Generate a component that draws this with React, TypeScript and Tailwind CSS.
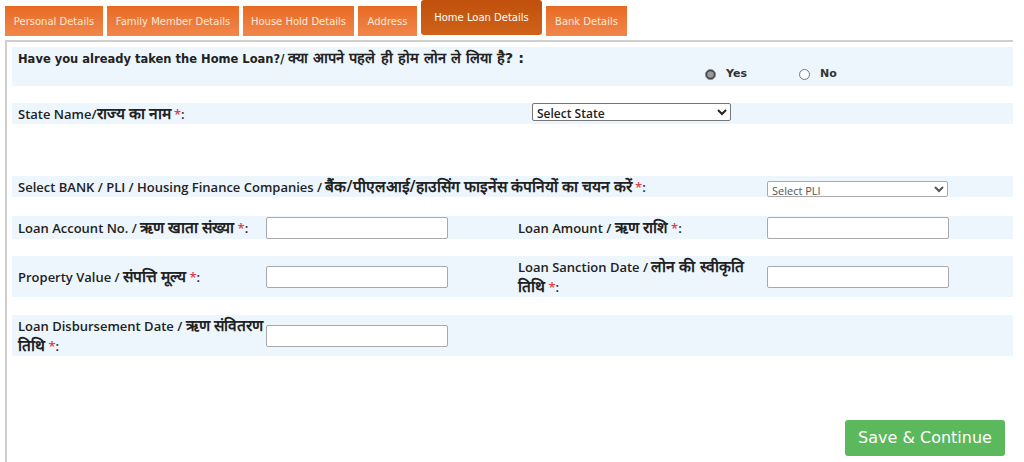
import React from "react";

const TABS = [
  { label: "Personal Details", w: "w-[98px]" },
  { label: "Family Member Details", w: "w-[132px]" },
  { label: "House Hold Details", w: "w-[111px]" },
  { label: "Address", w: "w-[59px]" },
  { label: "Home Loan Details", w: "w-[121px]", active: true },
  { label: "Bank Details", w: "w-[81px]" },
];

function Star() {
  return <span className="text-[#e0404a]"> *</span>;
}

// devanagari fallback renders small, bump it up to match
function Hi({ children }: { children: React.ReactNode }) {
  return <span className="text-[15.5px]">{children}</span>;
}

function TextBox() {
  return (
    <input
      type="text"
      className="h-[22px] w-[182px] rounded-[2px] border border-[#a9a9a9] bg-white"
    />
  );
}

export default function App() {
  return (
    <div className="relative h-[462px] w-[1024px] overflow-hidden bg-white font-['Open_Sans',sans-serif] text-[13px] text-[#222]">
      {/* Tabs */}
      <div className="flex h-[37px] items-start gap-[4px] pl-[5px]">
        {TABS.map((t) =>
          t.active ? (
            <div
              key={t.label}
              className={`${t.w} flex h-[35px] items-start justify-center rounded-[3px] bg-gradient-to-b from-[#c0500c] to-[#cf6318] pt-[10px] font-['DejaVu_Sans',sans-serif] text-[10px] text-white`}
            >
              {t.label}
            </div>
          ) : (
            <div
              key={t.label}
              className={`${t.w} mt-[6px] flex h-[30px] items-center justify-center bg-gradient-to-b from-[#e86a22] to-[#f0874a] font-['DejaVu_Sans',sans-serif] text-[10px] text-[#fde9da]`}
            >
              {t.label}
            </div>
          )
        )}
      </div>

      {/* Panel */}
      <div className="ml-[5px] mt-[3px] h-[430px] w-[1008px] border-l-2 border-t-2 border-[#cfcfcf] pl-[5px] pt-[5px]">
        {/* Home loan taken */}
        <div className="h-[39px] bg-[#eef6fd] pl-[6px] pt-[3px]">
          <div className="h-[17px] whitespace-nowrap font-['DejaVu_Sans',sans-serif] text-[11.5px] font-bold leading-[17px]">
            Have you already taken the Home Loan?/ <span className="text-[14.5px]">क्या आपने पहले ही होम लोन ले लिया है? :</span>
          </div>
          <div className="-mt-[1px] flex items-center pl-[687px] font-['DejaVu_Sans',sans-serif] text-[11px] font-bold text-[#333]">
            <label className="flex items-center">
              <input type="radio" name="taken" defaultChecked className="m-0 h-[11px] w-[11px] accent-[#999]" />
              <span className="ml-[10px]">Yes</span>
            </label>
            <label className="ml-[52px] flex items-center">
              <input type="radio" name="taken" className="m-0 h-[11px] w-[11px]" />
              <span className="ml-[10px]">No</span>
            </label>
          </div>
        </div>

        {/* State */}
        <div className="mt-[17px] flex h-[21px] items-center bg-[#eef6fd] pl-[6px] leading-[18px]">
          <div className="-mt-[1px] w-[514px] whitespace-nowrap font-semibold">
            State Name/<Hi>राज्य का नाम</Hi><Star />:
          </div>
          <select className="-mt-[3px] h-[18px] w-[199px] rounded-[2px] border border-[#767676] bg-white text-[12px] font-semibold text-[#222]">
            <option>Select State</option>
          </select>
        </div>

        {/* Bank / PLI */}
        <div className="mt-[52px] flex h-[21px] items-center bg-[#eef6fd] pl-[6px] leading-[18px]">
          <div className="w-[749px] whitespace-nowrap font-semibold">
            Select BANK / PLI / Housing Finance Companies / <Hi>बैंक/पीएलआई/हाउसिंग फाइनेंस कंपनियों का चयन करें</Hi><Star />:
          </div>
          <select className="mt-[4px] h-[16px] w-[181px] rounded-[2px] border border-[#a9a9a9] bg-white text-[11px] text-[#555]">
            <option>Select PLI</option>
          </select>
        </div>

        {/* Loan account / amount */}
        <div className="mt-[19px] grid h-[23px] grid-cols-[248px_252px_249px_1fr] items-center bg-[#eef6fd] pl-[6px] font-semibold leading-[18px]">
          <div className="-mt-[1px] whitespace-nowrap">
            Loan Account No. / <Hi>ऋण खाता संख्या</Hi><Star />:
          </div>
          <TextBox />
          <div className="-mt-[1px] whitespace-nowrap">
            Loan Amount / <Hi>ऋण राशि</Hi><Star />:
          </div>
          <TextBox />
        </div>

        {/* Property value / sanction date */}
        <div className="mt-[17px] grid h-[41px] grid-cols-[248px_252px_249px_1fr] items-center bg-[#eef6fd] pl-[6px] font-semibold leading-[19px]">
          <div className="whitespace-nowrap">
            Property Value / <Hi>संपत्ति मूल्य</Hi><Star />:
          </div>
          <TextBox />
          <div className="whitespace-nowrap">
            Loan Sanction Date / <Hi>लोन की स्वीकृति</Hi>
            <br />
            <Hi>तिथि</Hi><Star />:
          </div>
          <TextBox />
        </div>

        {/* Disbursement */}
        <div className="mt-[18px] grid h-[41px] grid-cols-[248px_252px_249px_1fr] items-center bg-[#eef6fd] pl-[6px] font-semibold leading-[19px]">
          <div className="whitespace-nowrap">
            Loan Disbursement Date / <Hi>ऋण संवितरण</Hi>
            <br />
            <Hi>तिथि</Hi><Star />:
          </div>
          <TextBox />
        </div>

        <div className="mt-[64px] flex justify-end pr-[8px]">
          <button className="h-[36px] w-[160px] rounded-[3px] bg-[#5cb85c] font-['DejaVu_Sans',sans-serif] text-[16px] text-white">
            Save &amp; Continue
          </button>
        </div>
      </div>
    </div>
  );
}
